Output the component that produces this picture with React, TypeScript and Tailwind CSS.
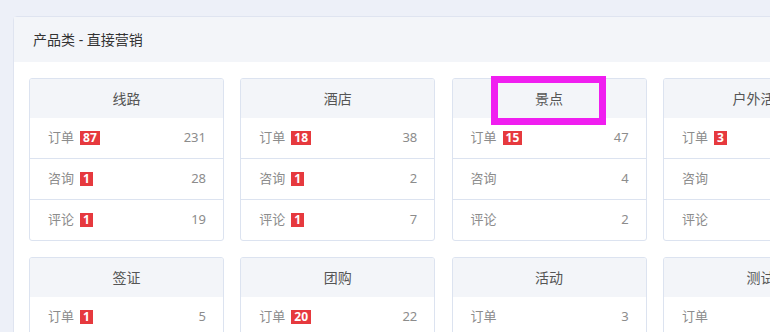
import React from 'react';

type Row = { label: string; badge?: number; count?: number };
type Card = { title: string; rows: Row[] };

const cards: Card[] = [
  { title: '线路', rows: [ { label: '订单', badge: 87, count: 231 }, { label: '咨询', badge: 1, count: 28 }, { label: '评论', badge: 1, count: 19 } ] },
  { title: '酒店', rows: [ { label: '订单', badge: 18, count: 38 }, { label: '咨询', badge: 1, count: 2 }, { label: '评论', badge: 1, count: 7 } ] },
  { title: '景点', rows: [ { label: '订单', badge: 15, count: 47 }, { label: '咨询', count: 4 }, { label: '评论', count: 2 } ] },
  { title: '户外活动', rows: [ { label: '订单', badge: 3, count: 9 }, { label: '咨询', count: 1 }, { label: '评论', count: 0 } ] },
  { title: '签证', rows: [ { label: '订单', badge: 1, count: 5 }, { label: '咨询', count: 0 }, { label: '评论', count: 0 } ] },
  { title: '团购', rows: [ { label: '订单', badge: 20, count: 22 }, { label: '咨询', count: 0 }, { label: '评论', count: 0 } ] },
  { title: '活动', rows: [ { label: '订单', count: 3 }, { label: '咨询', count: 0 }, { label: '评论', count: 0 } ] },
  { title: '测试', rows: [ { label: '订单', count: 0 }, { label: '咨询', count: 0 }, { label: '评论', count: 0 } ] },
];

const StatCard: React.FC<{ card: Card }> = ({ card }) => (
  <div className="overflow-hidden rounded-[3px] border border-[#dce3f0] bg-white">
    <div className="flex h-[39px] items-center justify-center bg-[#f3f5f9] text-[14px] text-[#555]">
      {card.title}
    </div>
    {card.rows.map((row, i) => (
      <div
        key={row.label}
        className={`flex items-center pl-[18px] pr-[17px] text-[13px] ${i > 0 ? 'h-[41px] border-t border-[#dce3f0]' : 'h-[40px]'}`}
      >
        <span className="text-[#8c8c8c]">{row.label}</span>
        {row.badge !== undefined && (
          <span className="ml-[6px] flex h-[14px] items-center bg-[#e6393e] px-[3px] text-[12px] font-bold leading-none text-white">
            {row.badge}
          </span>
        )}
        <span className="ml-auto text-[#8c8c8c]">{row.count}</span>
      </div>
    ))}
  </div>
);

export default function App() {
  return (
    <div
      className="relative h-[332px] w-[770px] overflow-hidden bg-[#edf0f8] pl-[13px] pt-[16px]"
      style={{ fontFamily: '"Noto Sans", "Noto Sans CJK SC", sans-serif' }}
    >
      <div className="w-[900px] rounded-[4px] border border-[#dfe4f0] bg-white">
        {/* Panel header */}
        <div className="flex h-[45px] items-center bg-[#f3f5f9] pl-[19px] text-[14px] text-[#333]">
          产品类 - 直接营销
        </div>

        {/* Card grid */}
        <div className="grid grid-cols-[repeat(4,195px)] gap-x-[16.3px] gap-y-[16px] px-[15px] pt-[16px] pb-[16px]">
          {cards.map((card) => (
            <StatCard key={card.title} card={card} />
          ))}
        </div>
      </div>

      {/* annotation highlight */}
      <div className="absolute left-[491px] top-[76px] h-[49px] w-[115px] border-[7px] border-[#f01ef0]" />
    </div>
  );
}
